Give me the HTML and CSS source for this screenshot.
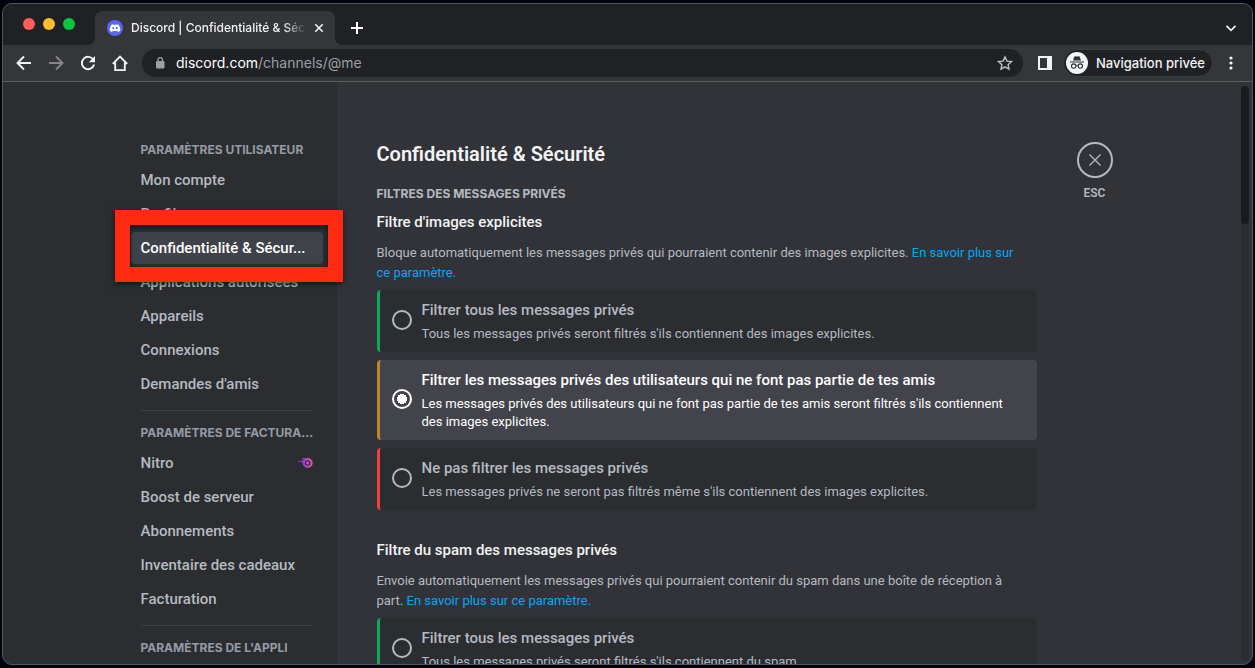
FILE: index.html
```html
<!DOCTYPE html>
<html lang="fr">
<head>
<meta charset="utf-8">
<title>Discord | Confidentialité &amp; Sécurité</title>
<link rel="stylesheet" href="styles.css">
</head>
<body>
<div class="window">
  <header class="tabstrip">
    <div class="lights">
      <button class="light light-close" aria-label="Fermer"></button>
      <button class="light light-min" aria-label="Réduire"></button>
      <button class="light light-max" aria-label="Agrandir"></button>
    </div>
    <div class="tab">
      <svg class="favicon" viewBox="0 0 16 16" aria-hidden="true">
        <circle cx="8" cy="8" r="8" fill="#5865f2"/>
        <path fill="#fff" d="M11.700 4.900A7 7 0 0 0 9.700 4.300l-.3.500a7 7 0 0 0-2.800 0l-.3-.5a7 7 0 0 0-2 .6C3 6.900 2.500 8.800 2.700 10.800c.8.6 1.700.9 2.500 1.100l.6-.9-.8-.4.2-.2c1.800.8 3.800.8 5.600 0l.2.200-.8.4.6.9c.8-.2 1.700-.5 2.500-1.100.2-2.200-.3-4-1.600-5.900zM6.300 9.300c-.5 0-.9-.5-.9-1.100s.4-1.100.9-1.100.9.5.9 1.100-.4 1.100-.9 1.100zm3.400 0c-.5 0-.9-.5-.9-1.100s.4-1.100.9-1.100.9.5.9 1.100-.4 1.100-.9 1.100z"/>
      </svg>
      <span class="tab-title">Discord | Confidentialité &amp; Sécu</span>
      <button class="icon-btn tab-close" aria-label="Fermer l'onglet">
        <svg viewBox="0 0 16 16"><path d="M4.300 4.300l7.400 7.400M11.700 4.300l-7.400 7.400" stroke="#f1f3f4" stroke-width="1.600" fill="none"/></svg>
      </button>
    </div>
    <button class="icon-btn new-tab" aria-label="Nouvel onglet">
      <svg viewBox="0 0 20 20"><path d="M10 4v12M4 10h12" stroke="#fff" stroke-width="2" fill="none"/></svg>
    </button>
    <button class="icon-btn tab-search" aria-label="Rechercher dans les onglets">
      <svg viewBox="0 0 20 20"><path d="M5.500 7.800l4.500 4.500 4.500-4.500" stroke="#f1f3f4" stroke-width="1.800" fill="none"/></svg>
    </button>
  </header>

  <div class="toolbar">
    <div class="nav-buttons">
      <button class="icon-btn" aria-label="Retour"><svg viewBox="0 0 20 20"><path d="M17 10H4M10 3.500L3.500 10l6.500 6.500" stroke="#f1f3f4" stroke-width="1.900" fill="none"/></svg></button>
      <button class="icon-btn" aria-label="Avancer"><svg viewBox="0 0 20 20"><path d="M3 10h13M10 3.500l6.500 6.500-6.500 6.500" stroke="#86878a" stroke-width="1.900" fill="none"/></svg></button>
      <button class="icon-btn" aria-label="Actualiser"><svg viewBox="0 0 20 20"><path d="M15.500 7A6.200 6.200 0 1 0 16.100 11.500" stroke="#f1f3f4" stroke-width="1.900" fill="none"/><path d="M17 3v6.200h-6.200z" fill="#f1f3f4"/></svg></button>
      <button class="icon-btn" aria-label="Accueil"><svg viewBox="0 0 20 20"><path d="M2.800 10.800L10 3.500l7.200 7.300M5.200 9.500v7.600h9.600V9.500" stroke="#f1f3f4" stroke-width="1.900" fill="none"/></svg></button>
    </div>
    <div class="address">
      <svg class="lock" viewBox="0 0 12 14" aria-hidden="true"><rect x="2" y="5" width="8.500" height="7.500" rx="1" fill="#9aa0a6"/><path d="M4 5.500V3.800a2.250 2.250 0 0 1 4.500 0V5.500" stroke="#9aa0a6" stroke-width="1.300" fill="none"/></svg>
      <span class="url"><span class="host">discord.com</span>/channels/@me</span>
      <button class="icon-btn star" aria-label="Ajouter aux favoris"><svg viewBox="0 0 20 20"><path d="M10 3.900l1.900 4.200 4.600.5-3.400 3.100.9 4.500-4-2.300-4 2.300.9-4.500-3.400-3.100 4.600-.5z" stroke="#bdc1c6" stroke-width="1.400" fill="none"/></svg></button>
    </div>
    <div class="tools">
      <button class="icon-btn" aria-label="Panneau latéral"><svg viewBox="0 0 20 20"><path fill="#f1f3f4" fill-rule="evenodd" d="M3 3h14v14H3zM5 5v10h7V5z"/></svg></button>
      <button class="profile">
        <svg viewBox="0 0 22 22" aria-hidden="true">
          <circle cx="11" cy="11" r="11" fill="#f1f3f4"/>
          <path fill="#303134" d="M8.200 4.900c.3-.7.7-.8 1.300-.6.900.3 2.100.3 3 0 .6-.2 1 0 1.300.6l1.200 3.600H7zM4 9.500h14v1H4z"/>
          <path d="M9.700 13.800c.8-.5 1.800-.5 2.600 0" stroke="#303134" fill="none"/>
          <circle cx="7.700" cy="14.100" r="2.200" stroke="#303134" fill="none" stroke-width="1.100"/>
          <circle cx="14.300" cy="14.100" r="2.200" stroke="#303134" fill="none" stroke-width="1.100"/>
        </svg>
        <span>Navigation privée</span>
      </button>
      <button class="icon-btn" aria-label="Menu"><svg viewBox="0 0 20 20" fill="#f1f3f4"><circle cx="10" cy="5" r="1.600"/><circle cx="10" cy="10" r="1.600"/><circle cx="10" cy="15" r="1.600"/></svg></button>
    </div>
  </div>

  <div class="page">
    <div class="sidebar-region">
      <nav class="sidebar" aria-label="Paramètres">
        <h2 class="nav-heading">PARAMÈTRES UTILISATEUR</h2>
        <ul class="nav-list">
          <li><a class="nav-item" href="#compte">Mon compte</a></li>
          <li><a class="nav-item" href="#profils">Profils</a></li>
          <li class="marked"><a class="nav-item selected" href="#confidentialite">Confidentialité &amp; Sécur...</a></li>
          <li><a class="nav-item" href="#applications">Applications autorisées</a></li>
          <li><a class="nav-item" href="#appareils">Appareils</a></li>
          <li><a class="nav-item" href="#connexions">Connexions</a></li>
          <li><a class="nav-item" href="#demandes">Demandes d'amis</a></li>
        </ul>
        <hr class="separator">
        <h2 class="nav-heading">PARAMÈTRES DE FACTURA...</h2>
        <ul class="nav-list">
          <li><a class="nav-item" href="#nitro">Nitro
            <svg class="nitro" viewBox="0 0 15 10" aria-hidden="true">
              <defs><linearGradient id="nitro-fill"><stop offset="0" stop-color="#9b3de0"/><stop offset="1" stop-color="#d9539f"/></linearGradient></defs>
              <path d="M4 .9h6M.5 3.300h1.800M3 3.300h4M4.500 5h2.500" stroke="#a93fd4" stroke-width="1.300" fill="none"/>
              <circle cx="9.700" cy="5" r="3.900" fill="none" stroke="url(#nitro-fill)" stroke-width="2.200"/>
              <circle cx="9.700" cy="5" r="1.700" fill="#c84bc0"/>
            </svg></a></li>
          <li><a class="nav-item" href="#boost">Boost de serveur</a></li>
          <li><a class="nav-item" href="#abonnements">Abonnements</a></li>
          <li><a class="nav-item" href="#inventaire">Inventaire des cadeaux</a></li>
          <li><a class="nav-item" href="#facturation">Facturation</a></li>
        </ul>
        <hr class="separator">
        <h2 class="nav-heading">PARAMÈTRES DE L'APPLI</h2>
      </nav>
    </div>

    <div class="content-region">
      <main class="content">
        <h1 class="title">Confidentialité &amp; Sécurité</h1>
        <p class="eyebrow">FILTRES DES MESSAGES PRIVÉS</p>

        <section class="setting">
          <h2 class="setting-title">Filtre d'images explicites</h2>
          <p class="description">Bloque automatiquement les messages privés qui pourraient contenir des images explicites. <a href="#images">En savoir plus sur<br>ce paramètre.</a></p>
          <div class="options">
            <label class="option safe">
              <input type="radio" name="images">
              <span class="option-text"><span class="option-title">Filtrer tous les messages privés</span><span class="option-desc">Tous les messages privés seront filtrés s'ils contiennent des images explicites.</span></span>
            </label>
            <label class="option medium">
              <input type="radio" name="images" checked>
              <span class="option-text"><span class="option-title">Filtrer les messages privés des utilisateurs qui ne font pas partie de tes amis</span><span class="option-desc">Les messages privés des utilisateurs qui ne font pas partie de tes amis seront filtrés s'ils contiennent<br>des images explicites.</span></span>
            </label>
            <label class="option danger">
              <input type="radio" name="images">
              <span class="option-text"><span class="option-title">Ne pas filtrer les messages privés</span><span class="option-desc">Les messages privés ne seront pas filtrés même s'ils contiennent des images explicites.</span></span>
            </label>
          </div>
        </section>

        <section class="setting">
          <h2 class="setting-title">Filtre du spam des messages privés</h2>
          <p class="description">Envoie automatiquement les messages privés qui pourraient contenir du spam dans une boîte de réception à<br>part. <a href="#spam">En savoir plus sur ce paramètre.</a></p>
          <div class="options">
            <label class="option safe">
              <input type="radio" name="spam">
              <span class="option-text"><span class="option-title">Filtrer tous les messages privés</span><span class="option-desc">Tous les messages privés seront filtrés s'ils contiennent du spam.</span></span>
            </label>
          </div>
        </section>
      </main>
      <div class="escape">
        <button class="escape-btn" aria-label="Fermer les paramètres"><svg viewBox="0 0 18 18"><path d="M3.500 3.500l11 11M14.500 3.500l-11 11" stroke="#b5bac1" stroke-width="1.300" fill="none"/></svg></button>
        <span>ESC</span>
      </div>
      <div class="scroll-track"><div class="scroll-thumb"></div></div>
    </div>
  </div>
</div>
</body>
</html>
```
FILE: styles.css
```css
* { box-sizing: border-box; }

body {
  margin: 0;
  height: 100vh;
  padding: 3px 2px;
  overflow: hidden;
  background: #01030f;
  color: #b5bac1;
  font-family: Roboto, "Noto Sans", sans-serif;
}

h1, h2, p, ul { margin: 0; padding: 0; }
ul { list-style: none; }
a { color: #00a8fc; text-decoration: none; }
button { padding: 0; border: 0; background: none; font: inherit; color: inherit; }
svg { display: block; }

.window {
  display: flex;
  flex-direction: column;
  height: 100%;
  overflow: hidden;
  border: 1px solid #55575b;
  border-radius: 10px;
  background: #313338;
}

.icon-btn { flex: none; width: 20px; height: 20px; }
.icon-btn svg { width: 100%; height: 100%; }

/* Tab strip */
.tabstrip {
  display: flex;
  flex: none;
  align-items: center;
  height: 41px;
  padding: 7px 11px 0 20px;
  background: #202124;
  font-family: Inter, sans-serif;
}
.lights { display: flex; gap: 8px; align-self: flex-start; margin-top: 7px; }
.light { width: 12px; height: 12px; border-radius: 50%; }
.light-close { background: #ff5f57; }
.light-min { background: #febc2e; }
.light-max { background: #06c840; }

.tab {
  position: relative;
  display: flex;
  align-items: center;
  width: 240px;
  height: 34px;
  margin-left: 20px;
  padding: 0 8px 0 12px;
  border-radius: 8px 8px 0 0;
  background: #35363a;
}
.tab::before, .tab::after {
  content: "";
  position: absolute;
  bottom: 0;
  width: 8px;
  height: 8px;
}
.tab::before { left: -8px; background: radial-gradient(circle at 0 0, #202124 8px, #35363a 8px); }
.tab::after { right: -8px; background: radial-gradient(circle at 100% 0, #202124 8px, #35363a 8px); }
.favicon { flex: none; width: 16px; height: 16px; }
.tab-title {
  flex: 1;
  min-width: 0;
  margin: 0 4px 0 8px;
  overflow: hidden;
  color: #f1f3f4;
  font-size: 12px;
  font-weight: 500;
  line-height: 16px;
  white-space: nowrap;
  -webkit-mask-image: linear-gradient(to left, transparent, #000 24px);
  mask-image: linear-gradient(to left, transparent, #000 24px);
}
.tab-close { width: 16px; height: 16px; }
.new-tab { margin-left: 12px; }
.tab-search { margin-left: auto; }

/* Toolbar */
.toolbar {
  display: flex;
  flex: none;
  align-items: center;
  height: 37px;
  padding: 0 11px;
  border-bottom: 1px solid #5c5d61;
  background: #35363a;
  font-family: Inter, sans-serif;
}
.nav-buttons { display: flex; gap: 12px; }
.address {
  display: flex;
  flex: 1;
  align-items: center;
  height: 28px;
  margin: 0 12px;
  padding: 0 8px 0 12px;
  border-radius: 14px;
  background: #202124;
}
.lock { flex: none; width: 12px; height: 14px; }
.url { flex: 1; margin-left: 10px; color: #9aa0a6; font-size: 14px; line-height: 20px; }
.host { color: #fff; }
.tools { display: flex; align-items: center; gap: 8px; }
.profile {
  display: flex;
  align-items: center;
  gap: 8px;
  height: 28px;
  padding: 0 7px 0 2px;
  border: 1px solid #3c3d41;
  border-radius: 14px;
  background: #202124;
  color: #f1f3f4;
  font-size: 13px;
  font-weight: 500;
}
.profile svg { width: 22px; height: 22px; }

/* Settings page */
.page { display: flex; flex: 1; min-height: 0; overflow: hidden; }

.sidebar-region {
  display: flex;
  flex: 1 0 218px;
  justify-content: flex-end;
  background: #2b2d31;
}
.sidebar { width: 218px; padding: 54px 14px 0 12px; }
.nav-heading {
  padding: 6px 0 6px 10px;
  color: #949ba4;
  font-family: Inter, sans-serif;
  font-size: 12px;
  font-weight: 700;
  line-height: 16px;
  white-space: nowrap;
}
.nav-list { display: flex; flex-direction: column; gap: 2px; padding-bottom: 2px; }
.nav-item {
  display: block;
  height: 32px;
  padding: 6px 10px;
  overflow: hidden;
  border-radius: 4px;
  color: #b5bac1;
  font-size: 15px;
  font-weight: 500;
  line-height: 20px;
  text-overflow: ellipsis;
  white-space: nowrap;
}
.nav-item.selected { background: #404249; color: #fff; }
.nitro { float: right; width: 15px; height: 10px; margin-top: 5px; }
.separator { height: 1px; margin: 8px 10px; border: 0; background: #3f4147; }

/* Red frame around the entry being pointed out */
.marked { position: relative; }
.marked::after {
  content: "";
  position: absolute;
  z-index: 1;
  inset: -22px -20px -18px -16px;
  border: 15px solid #ff2a12;
  box-shadow: 0 2px 5px rgba(0, 0, 0, 0.6), inset 0 2px 5px rgba(0, 0, 0, 0.6);
  pointer-events: none;
}

.content-region { display: flex; flex: 1 1 800px; min-width: 0; }
.content { flex: 0 1 740px; padding: 60px 40px 0; }
.title { color: #f2f3f5; font-size: 20px; font-weight: 600; line-height: 24px; }
.eyebrow { margin-top: 20px; font-family: Inter, sans-serif; font-size: 12px; font-weight: 700; line-height: 16px; }
.setting { margin-top: 10px; margin-bottom: 30px; }
.setting-title { color: #f2f3f5; font-size: 15px; font-weight: 500; line-height: 20px; }
.description { margin: 11px 0 7px; font-size: 13px; line-height: 20px; }

.options { display: flex; flex-direction: column; gap: 8px; }
.option {
  display: flex;
  align-items: center;
  gap: 10px;
  padding: 10px 10px 9px 12px;
  border-left: 3px solid;
  border-radius: 4px;
  background: #2b2d31;
}
.option.safe { border-color: #0ea75e; }
.option.medium { border-color: #c28527; }
.option.danger { border-color: #f23f42; }
.option:has(:checked) { background: #43444b; color: #fff; }
.option input {
  flex: none;
  width: 20px;
  height: 20px;
  margin: 0 0 3px;
  border: 2px solid currentColor;
  border-radius: 50%;
  appearance: none;
  color: inherit;
}
.option input:checked { background: radial-gradient(circle, #fff 5px, transparent 5px); }
.option-text { display: flex; flex-direction: column; gap: 5px; }
.option-title { font-size: 15px; font-weight: 500; line-height: 20px; }
.option-desc { font-size: 13px; line-height: 18px; }

.escape {
  display: flex;
  flex: none;
  flex-direction: column;
  align-items: center;
  gap: 7px;
  margin-top: 60px;
  font-size: 12px;
  font-weight: 600;
  line-height: 16px;
}
.escape-btn {
  display: grid;
  place-items: center;
  width: 36px;
  height: 36px;
  border: 2px solid #b5bac1;
  border-radius: 50%;
}
.escape-btn svg { width: 18px; height: 18px; }

.scroll-track {
  flex: none;
  width: 8px;
  margin: 4px 3px 4px auto;
  border-radius: 4px;
  background: #2b2d31;
}
.scroll-thumb { height: 24%; border-radius: 4px; background: #1a1b1e; }
```
